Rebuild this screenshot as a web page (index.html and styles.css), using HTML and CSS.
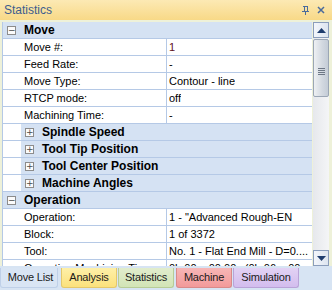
FILE: index.html
```html
<!DOCTYPE html>
<html>
<head>
<meta charset="utf-8">
<link rel="stylesheet" href="styles.css">
</head>
<body>
<div class="window">
  <div class="titlebar">
    <span class="title">Statistics</span>
    <span class="title-icons">
      <svg width="9" height="10" viewBox="0 0 9 10"><path d="M2 1h5M3 1v5M6 1v5M1 6h7M4.5 6v4" stroke="#4a6b9c" stroke-width="1" fill="none" shape-rendering="crispEdges"/></svg>
      <svg width="8" height="8" viewBox="0 0 8 8"><path d="M1 1L7 7M7 1L1 7" stroke="#4a6b9c" stroke-width="1.5" fill="none"/></svg>
    </span>
  </div>
  <div class="frame">
    <div class="grid">
      <div class="row cat">
        <span class="box">−</span><span class="cat-text">Move</span>
      </div>
      <div class="row prop"><span class="gutter"></span><span class="label">Move #:</span><span class="value changed">1</span></div>
      <div class="row prop"><span class="gutter"></span><span class="label">Feed Rate:</span><span class="value">-</span></div>
      <div class="row prop"><span class="gutter"></span><span class="label">Move Type:</span><span class="value">Contour - line</span></div>
      <div class="row prop"><span class="gutter"></span><span class="label">RTCP mode:</span><span class="value">off</span></div>
      <div class="row prop"><span class="gutter"></span><span class="label">Machining Time:</span><span class="value">-</span></div>
      <div class="row sub"><span class="gutter"></span><span class="sub-body"><span class="box">+</span><span class="cat-text">Spindle Speed</span></span></div>
      <div class="row sub"><span class="gutter"></span><span class="sub-body"><span class="box">+</span><span class="cat-text">Tool Tip Position</span></span></div>
      <div class="row sub"><span class="gutter"></span><span class="sub-body"><span class="box">+</span><span class="cat-text">Tool Center Position</span></span></div>
      <div class="row sub"><span class="gutter"></span><span class="sub-body"><span class="box">+</span><span class="cat-text">Machine Angles</span></span></div>
      <div class="row cat">
        <span class="box">−</span><span class="cat-text">Operation</span>
      </div>
      <div class="row prop"><span class="gutter"></span><span class="label">Operation:</span><span class="value">1 - "Advanced Rough-EN</span></div>
      <div class="row prop"><span class="gutter"></span><span class="label">Block:</span><span class="value">1 of 3372</span></div>
      <div class="row prop"><span class="gutter"></span><span class="label">Tool:</span><span class="value">No. 1 - Flat End Mill - D=0....</span></div>
      <div class="row prop"><span class="gutter"></span><span class="label">Operation Machining Time:</span><span class="value">0h 00m 00.00s (0h 06m 00...</span></div>
    </div>
    <div class="scrollbar">
      <div class="sb-btn"><svg width="9" height="5" viewBox="0 0 9 5"><path d="M4.5 0L9 5H0Z" fill="#1f3d6e"/></svg></div>
      <div class="sb-thumb"><span class="grip"></span><span class="grip"></span><span class="grip"></span><span class="grip"></span></div>
      <div class="sb-track"></div>
      <div class="sb-btn"><svg width="9" height="5" viewBox="0 0 9 5"><path d="M0 0H9L4.5 5Z" fill="#1f3d6e"/></svg></div>
    </div>
  </div>
  <div class="tabbar">
    <span class="tab t-move">Move List</span>
    <span class="tab t-analysis">Analysis</span>
    <span class="tab t-stats">Statistics</span>
    <span class="tab t-machine">Machine</span>
    <span class="tab t-sim">Simulation</span>
  </div>
</div>
</body>
</html>
```

FILE: styles.css
```css
html, body {
  margin: 0;
  padding: 0;
}
body {
  width: 332px;
  height: 290px;
  overflow: hidden;
  font-family: "Liberation Sans", Arial, sans-serif;
  font-size: 11px;
  background: #d7e4f3;
}
.window {
  display: flex;
  flex-direction: column;
  width: 332px;
  height: 290px;
}
.titlebar {
  height: 20px;
  flex: none;
  display: flex;
  align-items: center;
  justify-content: space-between;
  padding: 0 7px 0 4px;
  background: linear-gradient(#fce9b4, #f8d987);
}
.title {
  font-size: 12px;
  color: #3d5d8e;
}
.title-icons {
  display: flex;
  align-items: center;
  gap: 7px;
}
.title-icons svg {
  display: block;
}
.frame {
  flex: 1;
  display: flex;
  padding: 2px 3px 0 2px;
  background: #eef1d9;
  min-height: 0;
}
.grid {
  width: 310px;
  border-left: 1px solid #b5c9e6;
  background: #ffffff;
  overflow: hidden;
}
.row {
  display: flex;
  height: 16px;
  border-bottom: 1px solid #b5c9e6;
  line-height: 16px;
  white-space: nowrap;
}
.cat {
  background: #d5e2f3;
  align-items: center;
}
.box {
  width: 7px;
  height: 7px;
  border: 1px solid #8c8c8c;
  background: #fbfbfb;
  font-size: 9px;
  line-height: 7px;
  text-align: center;
  color: #4a4a4a;
  flex: none;
  overflow: hidden;
  font-family: "DejaVu Sans", sans-serif;
}
.cat .box {
  margin-left: 4px;
  margin-right: 8px;
}
.cat-text {
  font-weight: bold;
  font-size: 12px;
  color: #000;
}
.gutter {
  width: 18px;
  flex: none;
  background: #ffffff;
}
.prop .label {
  width: 142px;
  flex: none;
  padding-left: 3px;
  border-right: 1px solid #b5c9e6;
  overflow: hidden;
  color: #000;
}
.prop .value {
  padding-left: 2px;
  overflow: hidden;
  color: #000;
}
.value.changed {
  color: #5e0f1c;
}
.sub-body {
  flex: 1;
  display: flex;
  align-items: center;
  background: #d5e2f3;
}
.sub .box {
  margin-left: 4px;
  margin-right: 8px;
}
.scrollbar {
  width: 16px;
  margin-left: 1px;
  display: flex;
  flex-direction: column;
  background: linear-gradient(90deg, #e6e8ec, #f4f5f7);
}
.sb-btn {
  flex: none;
  border: 1px solid #8a9dbb;
  box-sizing: border-box;
  height: 16px;
  background: linear-gradient(90deg, #f3f6fb, #dde5f0);
  display: flex;
  align-items: center;
  justify-content: center;
}
.sb-btn svg {
  display: block;
}
.sb-thumb {
  height: 58px;
  flex: none;
  margin-top: 1px;
  border: 1px solid #9ba6b5;
  border-radius: 2px;
  box-sizing: border-box;
  background: linear-gradient(90deg, #eef0f3, #d2d8e0 60%, #c4ccd7);
  display: flex;
  flex-direction: column;
  align-items: center;
  justify-content: center;
  gap: 1px;
  padding-top: 6px;
}
.grip {
  width: 7px;
  height: 1px;
  background: #6d7786;
}
.sb-track {
  flex: 1;
}
.tabbar {
  height: 24px;
  flex: none;
  display: flex;
  align-items: flex-start;
  padding-top: 2px;
  box-sizing: border-box;
  background: #d7e4f3;
}
.tab {
  height: 20px;
  line-height: 19px;
  box-sizing: border-box;
  border: 1px solid transparent;
  border-top: none;
  border-radius: 0 0 3px 3px;
  font-size: 11px;
  letter-spacing: -0.2px;
  color: #1a1a1a;
  text-align: center;
  white-space: nowrap;
  overflow: hidden;
  flex: none;
}
.t-move {
  width: 58px;
  background: #d9e5f4;
  border-color: #bfd0e8;
  padding-left: 3px;
}
.t-analysis {
  width: 56px;
  margin-left: 3px;
  background: linear-gradient(#fef0a8, #fbe17c);
  border-color: #e4c86a;
}
.t-stats {
  width: 56px;
  margin-left: 1px;
  background: linear-gradient(#e1edcd, #d2e4b6);
  border-color: #b7cc97;
}
.t-machine {
  width: 56px;
  margin-left: 2px;
  background: linear-gradient(#f7b6b6, #f29a9a);
  border-color: #d88a8a;
}
.t-sim {
  width: 66px;
  margin-left: 1px;
  background: linear-gradient(#e2d2f4, #d3bdee);
  border-color: #b9a3d8;
}
```
